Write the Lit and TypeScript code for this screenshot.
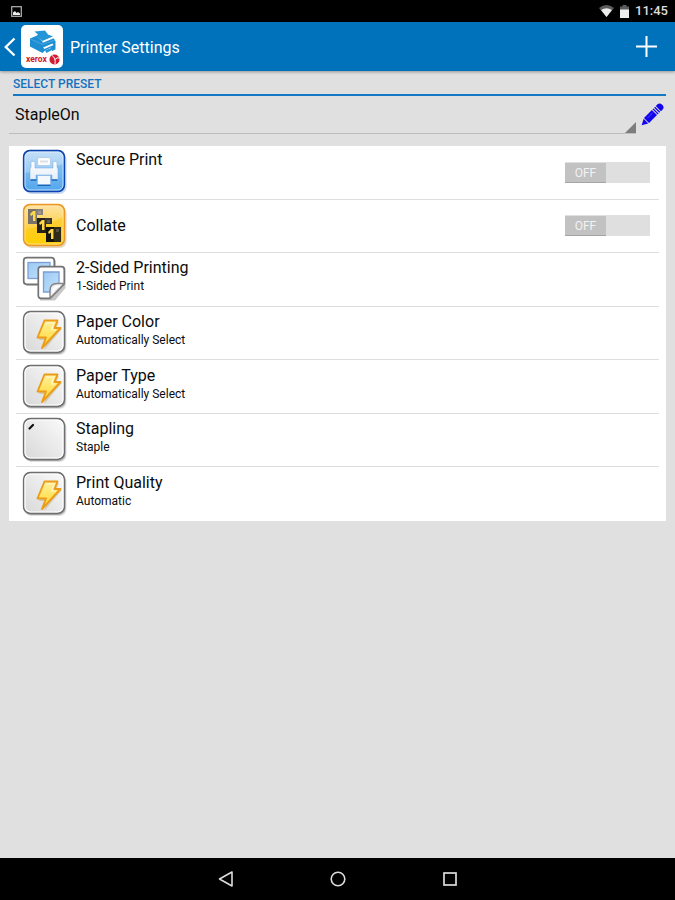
import { LitElement, html, css, svg, nothing } from "lit";
import { customElement, property } from "lit/decorators.js";

type IconName = "secure" | "collate" | "sides" | "auto" | "staple";

interface Setting {
  title: string;
  icon: IconName;
  value?: string;
  toggle?: boolean;
  top?: boolean;
}

const settings: Setting[] = [
  { title: "Secure Print", icon: "secure", toggle: true, top: true },
  { title: "Collate", icon: "collate", toggle: true },
  { title: "2-Sided Printing", icon: "sides", value: "1-Sided Print" },
  { title: "Paper Color", icon: "auto", value: "Automatically Select" },
  { title: "Paper Type", icon: "auto", value: "Automatically Select" },
  { title: "Stapling", icon: "staple", value: "Staple" },
  { title: "Print Quality", icon: "auto", value: "Automatic" },
];

const tile = svg`
  <rect x="2.5" y="3" width="42" height="42" rx="7" fill="#000" opacity=".12"/>
  <rect x="2" y="2.500" width="41.500" height="41.500" rx="7" fill="#000" opacity=".22"/>
  <rect x="1.700" y="1.700" width="40.600" height="40.600" rx="6.500" fill="url(#g)" stroke="#6f6f6f" stroke-width="1.700"/>
  <rect x="3" y="3" width="38" height="38" rx="5.500" fill="none" stroke="#fff" stroke-width="1.200"/>`;

const greyGradient = svg`
  <linearGradient id="g" x1="0" y1="1" x2="1" y2="0">
    <stop offset="0" stop-color="#d8d8d8"/><stop offset="1" stop-color="#fafafa"/>
  </linearGradient>`;

const collateSheet = (x: number, y: number, fill: string, shade: string) => svg`
  <g transform="translate(${x} ${y})">
    <path d="M0 0H9V15H0Z" fill="${fill}"/>
    <path d="M8 0H15V6H8Z" fill="${shade}"/>
    <path d="M2 5L5 2H7.500V12H5V5.500L3 7Z" fill="#ffd84a"/>
    <path d="M10 2H13V5H10Z" fill="#fff" opacity=".18"/>
  </g>`;

const icons = {
  secure: svg`
    <defs>
      <linearGradient id="b" x1="0" y1="0" x2="0" y2="1">
        <stop offset="0" stop-color="#c6e0f7"/><stop offset=".5" stop-color="#9accf4"/><stop offset="1" stop-color="#5eabee"/>
      </linearGradient>
      <linearGradient id="p" x1="0" y1="0" x2="0" y2="1">
        <stop offset="0" stop-color="#fff"/><stop offset="1" stop-color="#e4edf8"/>
      </linearGradient>
    </defs>
    <rect x="2.500" y="3" width="42" height="42" rx="7" fill="#1f5fc4" opacity=".25"/>
    <rect x="1.700" y="1.700" width="40.600" height="40.600" rx="6" fill="url(#b)" stroke="#0b43ae" stroke-width="1.700"/>
    <path d="M3 24Q22 23 41 15V36Q41 41 36 41H8Q3 41 3 36Z" fill="#399be9" opacity=".35"/>
    <rect x="3" y="3" width="38" height="38" rx="5" fill="none" stroke="#e1f1ff" opacity=".75"/>
    <path d="M9 12.500H12Q13 12.500 13 13.500V19H31V13.500Q31 12.500 32 12.500H34Q35 12.500 35 13.500V18Q36 19 36 21V31H30V26H14V31H8V21Q8 19 9 18Z" fill="url(#p)" stroke="#6fa7dc" stroke-width=".5"/>
    <path d="M8.500 31H14.500M29.500 31H35.500" stroke="#1764bb" stroke-width="1.400"/>
    <rect x="15.500" y="8.500" width="13" height="8" rx="1.500" fill="#fafcff" stroke="#9fbede" stroke-width=".6"/>
    <path d="M18 12.500H26" stroke="#dde1e6" stroke-width="2"/>
    <path d="M15.500 26.500H28.500V35Q28.500 36 27.500 36H16.500Q15.500 36 15.500 35Z" fill="#f3f8ff" stroke="#8ab8e6" stroke-width=".8"/>
    <path d="M15.500 36.300H28.500" stroke="#1764bb" stroke-width="1.400"/>`,
  collate: svg`
    <defs>
      <linearGradient id="o" x1="0" y1="0" x2="0" y2="1">
        <stop offset="0" stop-color="#fde3a5"/><stop offset=".55" stop-color="#ffd24a"/><stop offset="1" stop-color="#fbd500"/>
      </linearGradient>
    </defs>
    <rect x="2.500" y="3" width="42" height="42" rx="7" fill="#a06a10" opacity=".28"/>
    <rect x="1.700" y="1.700" width="40.600" height="40.600" rx="6" fill="url(#o)" stroke="#eb9722" stroke-width="1.700"/>
    <path d="M3 26Q24 23 41 14V36Q41 41 36 41H8Q3 41 3 36Z" fill="#ffc800" opacity=".5"/>
    <rect x="3" y="3" width="38" height="38" rx="5" fill="none" stroke="#ffe9ae" opacity=".75"/>
    ${collateSheet(6, 6, "#77716a", "#87817a")}
    ${collateSheet(15, 15, "#24221a", "#37342b")}
    ${collateSheet(24, 24, "#15140c", "#2f2b18")}
    <path d="M32 30H39V39H32Z" fill="#2f2b18"/>`,
  sides: svg`
    <defs>
      <linearGradient id="s" x1="0" y1="0" x2="1" y2="1">
        <stop offset="0" stop-color="#9bcaf4"/><stop offset="1" stop-color="#c4e2fa"/>
      </linearGradient>
    </defs>
    <rect x="3" y="3" width="31" height="27" rx="3" fill="#000" opacity=".2"/>
    <rect x="1.700" y="1.700" width="30.600" height="26.600" rx="3" fill="#fff" stroke="#737373" stroke-width="1.700"/>
    <rect x="6" y="6.500" width="22" height="16" fill="url(#s)" stroke="#7e9fd5" stroke-width="1.300"/>
    <path d="M18 12H43.500V32L33 44.500H18Z" fill="#000" opacity=".22"/>
    <path d="M19 10.700H39.500Q42.300 10.700 42.300 13.500V28L28 42.300H19Q16.300 42.300 16.300 39.500V13.500Q16.300 10.700 19 10.700Z" fill="#fff" stroke="#737373" stroke-width="1.700"/>
    <path d="M21.500 16H37V28Q28 27 28 36H21.500Z" fill="url(#s)" stroke="#7e9fd5" stroke-width="1.300"/>
    <path d="M42.300 27.500H35Q28 27.500 28 34.500V42.300Z" fill="#efefef" stroke="#858585" stroke-width="1.400" stroke-linejoin="round"/>
    <path d="M31 36Q31 31 38 30" fill="none" stroke="#fff" stroke-width="2"/>`,
  auto: svg`
    <defs>
      ${greyGradient}
      <linearGradient id="y" x1="0" y1="0" x2="0" y2="1">
        <stop offset="0" stop-color="#fff0a0"/><stop offset=".45" stop-color="#ffe566"/><stop offset="1" stop-color="#ffd23a"/>
      </linearGradient>
    </defs>
    ${tile}
    <path d="M23 12H37L34 19H40L22 40L25.500 30H17Z" fill="#806000" opacity=".22"/>
    <path d="M22.500 10.500H35.500L32.500 18H38.500L20 38L24 27.500H15.500Z" fill="url(#y)" stroke="#ec9c18" stroke-width="1.900" stroke-linejoin="round"/>
    <path d="M24 13H32L29.500 20H34" fill="none" stroke="#fff8ca" stroke-width="1.200"/>`,
  staple: svg`
    <defs>${greyGradient}</defs>
    ${tile}
    <path d="M7.500 11.500L11 8" stroke="#111" stroke-width="2.200" stroke-linecap="round"/>`,
};

@customElement("setting-row")
export class SettingRow extends LitElement {
  @property({ attribute: false }) setting!: Setting;

  static styles = css`
    :host { display: grid; }
    .row {
      display: grid;
      grid-template-columns: 46px 1fr auto;
      column-gap: 8px;
      align-items: center;
      width: 100%;
      box-sizing: border-box;
      margin: 0;
      padding: 0 9px 0 6px;
      border: 0;
      border-bottom: 1px solid #dedede;
      background: none;
      color: #0c0c0c;
      font: inherit;
      text-align: left;
    }
    :host(:last-child) .row { border-bottom-color: transparent; }
    .icon { display: block; width: 46px; height: 46px; }
    .text { display: flex; flex-direction: column; }
    .text.top { align-self: start; padding-top: 4px; }
    .text.double { padding-bottom: 6px; }
    .title { font-size: 16px; line-height: 20px; }
    .value { font-size: 12px; line-height: 16px; }
    .switch {
      display: grid;
      width: 85px;
      height: 21px;
      background: #dfdfdf;
    }
    .check { appearance: none; grid-area: 1 / 1; margin: 0; width: 100%; height: 100%; }
    .thumb {
      grid-area: 1 / 1;
      box-sizing: border-box;
      width: 41px;
      height: 20px;
      margin: 1px 0 0;
      border-bottom: 1px solid #a5a5a5;
      background: #c2c2c2;
      color: #f2f2f2;
      font-size: 12px;
      line-height: 20px;
      text-align: center;
      pointer-events: none;
    }
    .check:checked + .thumb { margin-left: 44px; background: #0072bc; }
  `;

  render() {
    const s = this.setting;
    const icon = html`<svg class="icon" viewBox="0 0 46 46" aria-hidden="true">${icons[s.icon]}</svg>`;
    const text = html`<span class="text ${s.top ? "top" : ""} ${s.value ? "double" : ""}">
      <span class="title">${s.title}</span>
      ${s.value ? html`<span class="value">${s.value}</span>` : nothing}
    </span>`;
    return s.toggle
      ? html`<label class="row">${icon}${text}
          <span class="switch"><input class="check" type="checkbox" role="switch" aria-label=${s.title} /><span class="thumb">OFF</span></span>
        </label>`
      : html`<button class="row" type="button">${icon}${text}</button>`;
  }
}

@customElement("app-root")
export class AppRoot extends LitElement {
  static styles = css`
    :host {
      display: flex;
      flex-direction: column;
      min-height: 100vh;
      background: #e0e0e0;
      color: #0c0c0c;
      font-family: Roboto, "Noto Sans", sans-serif;
    }
    button { margin: 0; padding: 0; border: 0; background: none; }
    svg { display: block; }
    .status {
      display: flex;
      align-items: center;
      height: 22px;
      padding: 0 7px 0 11px;
      background: #000;
      color: #dcdcdc;
    }
    .signals { display: flex; align-items: center; gap: 6px; margin-left: auto; }
    .clock { font-size: 13px; font-weight: 500; line-height: 24px; }
    .bar {
      display: flex;
      align-items: center;
      height: 49px;
      padding-right: 18px;
      background: #0072bc;
      color: #fff;
      box-shadow: 0 1px 3px rgba(0, 0, 0, 0.35);
    }
    .home { display: flex; align-items: center; gap: 5px; padding-left: 4px; }
    .heading { margin: 0 0 0 7px; font-size: 16px; font-weight: 400; line-height: 20px; padding-top: 2px; }
    .add { margin-left: auto; }
    main { flex: 1; padding: 0 9px 24px; }
    .caption {
      display: block;
      margin-left: 4px;
      padding-top: 5px;
      height: 18px;
      border-bottom: 2px solid #1478c4;
      color: #1272c0;
      font-size: 12px;
      font-weight: 500;
      line-height: 16px;
    }
    .preset { display: flex; align-items: center; height: 37px; margin-bottom: 13px; }
    .field {
      display: grid;
      flex: 1;
      height: 37px;
      border-bottom: 1px solid #bdbdbd;
    }
    .select {
      appearance: none;
      grid-area: 1 / 1;
      width: 100%;
      margin: 0;
      padding: 2px 16px 0 6px;
      border: 0;
      border-radius: 0;
      background: none;
      color: inherit;
      font: 16px/20px Roboto, "Noto Sans", sans-serif;
    }
    .corner { grid-area: 1 / 1; place-self: end; pointer-events: none; }
    .edit { margin: 0 2px 0 5px; }
    .card {
      display: grid;
      grid-auto-rows: 1fr;
      min-height: 375px;
      padding: 0 7px;
      background: #fff;
    }
    .nav {
      display: flex;
      justify-content: center;
      align-items: center;
      gap: 92px;
      height: 42px;
      background: #000;
    }
  `;

  render() {
    return html`
      <div class="status">
        <svg width="11" height="11" viewBox="0 0 11 11" aria-hidden="true">
          <rect x=".7" y=".7" width="9.600" height="9.600" fill="none" stroke="#b5b5b5" stroke-width="1.200"/>
          <path d="M2 9V6.500L4 5L5.500 7L7 6L9 7.500V9Z" fill="#eee"/>
        </svg>
        <span class="signals">
          <svg width="15" height="12" viewBox="0 0 15 12" aria-hidden="true">
            <path d="M0 3Q7.500 -3 15 3L7.500 12Z" fill="#5c5c5c"/>
            <path d="M2 5Q7.500 1.500 13 5L7.500 12Z" fill="#ededed"/>
          </svg>
          <svg width="9" height="13" viewBox="0 0 9 13" aria-hidden="true">
            <path d="M0 1.500H2.500V0H6.500V1.500H9V5H0Z" fill="#5c5c5c"/>
            <path d="M0 4.500H9V13H0Z" fill="#ededed"/>
          </svg>
          <span class="clock">11:45</span>
        </span>
      </div>
      <header class="bar">
        <button class="home" type="button" aria-label="Back">
          <svg width="12" height="20" viewBox="0 0 12 20">
            <path d="M10.500 1.500L1.800 10L10.500 18.500" fill="none" stroke="#fff" stroke-width="2.400"/>
          </svg>
          <svg width="42" height="43" viewBox="0 0 42 43">
            <rect width="42" height="43" rx="5" fill="#fff"/>
            <path d="M9 13.500L15 11L21.500 16.500L32 12.500L34.500 16V24.500L31 26L30 22.500L24 25.500L21.500 28L9 21.500Z" fill="#1e8ed2"/>
            <path d="M13.500 6.500L24 5.500L27 9.500L32 11.500L21.500 16L14.500 11.500L17 9.500Z" fill="#2495d7"/>
            <path d="M9.500 14L21.500 19.500L34 15" fill="none" stroke="#54afe3" stroke-width=".8"/>
            <path d="M21.500 17L32.500 12.500" stroke="#fff" stroke-width="1.400"/>
            <path d="M22 22.500L31.500 18.500L32.500 20L23.500 24Z" fill="#fff"/>
            <path d="M24 25.500L31 22.500V25L25.500 28Z" fill="#2495d7"/>
            <text x="5" y="37" font-family="Roboto, sans-serif" font-size="8.500" font-weight="700" fill="#d01930">xerox</text>
            <circle cx="33.500" cy="34.500" r="5" fill="#d41b32"/>
            <path d="M31 30.500Q35 33 34 39M34 34.500Q36 32 38.500 33" fill="none" stroke="#fff" stroke-width="1"/>
          </svg>
        </button>
        <h1 class="heading">Printer Settings</h1>
        <button class="add" type="button" aria-label="Add preset">
          <svg width="21" height="21" viewBox="0 0 21 21">
            <path d="M10.500 0V21M0 10.500H21" stroke="#fff" stroke-width="2"/>
          </svg>
        </button>
      </header>
      <main>
        <label class="caption" for="preset">SELECT PRESET</label>
        <div class="preset">
          <div class="field">
            <select class="select" id="preset"><option>StapleOn</option></select>
            <svg class="corner" width="11" height="11" viewBox="0 0 11 11" aria-hidden="true"><path d="M11 0V11H0Z" fill="#7d7d7d"/></svg>
          </div>
          <button class="edit" type="button" aria-label="Edit preset">
            <svg width="23" height="23" viewBox="0 0 23 23">
              <g transform="translate(.7 22.300) rotate(-45)" fill="#1205ee">
                <path d="M0 0L6 -3.300V3.300Z"/>
                <path d="M6.800 -3.600H18V3.600H6.800Z"/>
                <path d="M19 -3.600H20.300V3.600H19ZM21.300 -3.600H22.600V3.600H21.300Z"/>
                <path d="M23.600 -3.600H26Q29 -3.600 29 0Q29 3.600 26 3.600H23.600Z"/>
                <path d="M9 -1H17" stroke="#5a50f4" stroke-width=".8"/>
              </g>
            </svg>
          </button>
        </div>
        <section class="card">
          ${settings.map((s) => html`<setting-row .setting=${s}></setting-row>`)}
        </section>
      </main>
      <nav class="nav">
        <button type="button" aria-label="Back">
          <svg width="20" height="20" viewBox="0 0 20 20"><path d="M16 3V17L3.500 10Z" fill="none" stroke="#dcdcdc" stroke-width="1.600" stroke-linejoin="round"/></svg>
        </button>
        <button type="button" aria-label="Home">
          <svg width="20" height="20" viewBox="0 0 20 20"><circle cx="10" cy="10" r="6.800" fill="none" stroke="#dcdcdc" stroke-width="1.600"/></svg>
        </button>
        <button type="button" aria-label="Recent apps">
          <svg width="20" height="20" viewBox="0 0 20 20"><rect x="4" y="4" width="12" height="12" fill="none" stroke="#dcdcdc" stroke-width="1.700"/></svg>
        </button>
      </nav>
    `;
  }
}
